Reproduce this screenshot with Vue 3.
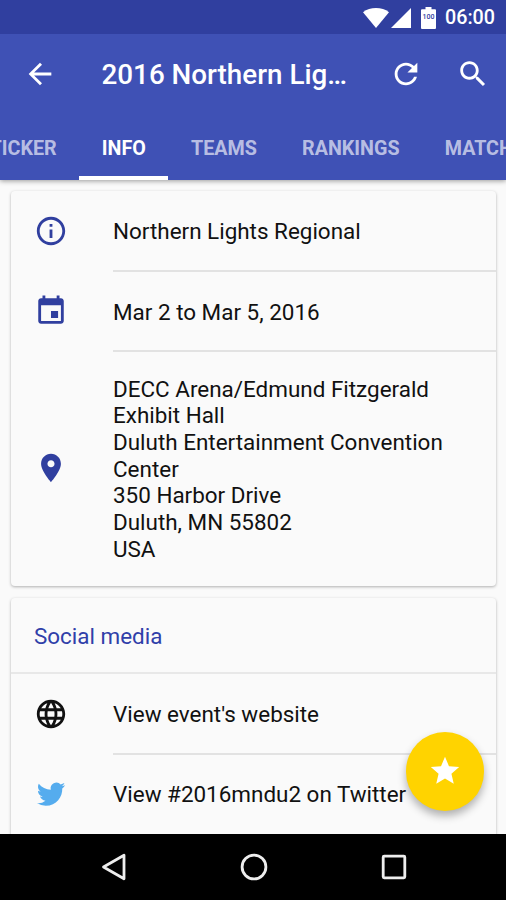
<template>
  <div class="screen">
    <header class="app-header">
      <div class="status-bar">
        <svg class="wifi" viewBox="0 0 26 20">
          <path d="M13 20 0 4.2C7-1.4 19-1.4 26 4.2Z" />
        </svg>
        <svg class="signal" viewBox="0 0 20 20"><path d="M0 20 20 0V20Z" /></svg>
        <div class="battery">
          <svg viewBox="0 0 15 22">
            <path d="M4.5 0h6v2.2H14q1 0 1 1V21q0 1-1 1H1q-1 0-1-1V3.200q0-1 1-1h3.500Z" />
          </svg>
          <span class="battery-level">100</span>
        </div>
        <span class="clock">06:00</span>
      </div>

      <div class="toolbar">
        <svg class="icon back" viewBox="0 0 24 24"><path :d="icons.back" /></svg>
        <h1 class="title">2016 Northern Lig…</h1>
        <svg class="icon refresh" viewBox="0 0 24 24"><path :d="icons.refresh" /></svg>
        <svg class="icon search" viewBox="0 0 24 24"><path :d="icons.search" /></svg>
      </div>

      <nav class="tabs">
        <div
          v-for="tab in tabs"
          :key="tab"
          :class="['tab', { active: tab === activeTab }]"
          @click="activeTab = tab"
        >
          {{ tab }}
        </div>
      </nav>
    </header>

    <main class="content">
      <section class="card details">
        <div v-for="row in details" :key="row.icon" :class="['row', row.icon]">
          <svg class="icon" viewBox="0 0 24 24"><path :d="icons[row.icon]" /></svg>
          <div class="row-text">
            <div v-for="line in row.lines" :key="line">{{ line }}</div>
          </div>
        </div>
      </section>

      <section class="card social">
        <h2 class="card-title">Social media</h2>
        <div v-for="row in social" :key="row.icon" :class="['row', row.icon]">
          <svg class="icon" viewBox="0 0 24 24"><path :d="icons[row.icon]" /></svg>
          <div class="row-text">
            <div v-for="line in row.lines" :key="line">{{ line }}</div>
          </div>
        </div>
      </section>

      <button class="fab" @click="starred = !starred">
        <svg class="icon" viewBox="0 0 24 24"><path :d="icons.star" /></svg>
      </button>
    </main>

    <footer class="nav-bar">
      <svg viewBox="0 0 28 28"><path d="M24 2.200V25.800L3.500 14Z" /></svg>
      <svg viewBox="0 0 28 28"><circle cx="14" cy="14" r="11.900" /></svg>
      <svg viewBox="0 0 28 28"><rect x="3.200" y="3.200" width="21.600" height="21.600" rx="1" /></svg>
    </footer>
  </div>
</template>

<script setup>
import { ref } from "vue";

const tabs = ["TICKER", "INFO", "TEAMS", "RANKINGS", "MATCHES"];
const activeTab = ref("INFO");
const starred = ref(true);

const details = [
  { icon: "info", lines: ["Northern Lights Regional"] },
  { icon: "event", lines: ["Mar 2 to Mar 5, 2016"] },
  {
    icon: "place",
    lines: [
      "DECC Arena/Edmund Fitzgerald",
      "Exhibit Hall",
      "Duluth Entertainment Convention",
      "Center",
      "350 Harbor Drive",
      "Duluth, MN 55802",
      "USA",
    ],
  },
];

const social = [
  { icon: "web", lines: ["View event's website"] },
  { icon: "twitter", lines: ["View #2016mndu2 on Twitter"] },
];

// 24x24 icon paths
const icons = {
  back: "M20 11H7.830l5.590-5.590L12 4l-8 8 8 8 1.410-1.410L7.830 13H20v-2z",
  refresh:
    "M17.650 6.350C16.200 4.900 14.210 4 12 4c-4.420 0-7.990 3.580-7.990 8s3.570 8 7.990 8c3.730 0 6.840-2.550 7.730-6h-2.080c-.82 2.330-3.040 4-5.650 4-3.310 0-6-2.690-6-6s2.690-6 6-6c1.660 0 3.140.69 4.220 1.780L13 11h7V4l-2.350 2.350z",
  search:
    "M15.500 14h-.79l-.28-.27C15.410 12.590 16 11.110 16 9.500 16 5.910 13.090 3 9.500 3S3 5.910 3 9.500 5.910 16 9.500 16c1.610 0 3.090-.59 4.230-1.570l.27.28v.79l5 4.990L20.490 19l-4.990-5zm-6 0C7.010 14 5 11.990 5 9.500S7.010 5 9.500 5 14 7.010 14 9.500 11.990 14 9.500 14z",
  info: "M11 17h2v-6h-2v6zm1-15C6.480 2 2 6.480 2 12s4.480 10 10 10 10-4.480 10-10S17.520 2 12 2zm0 18c-4.410 0-8-3.590-8-8s3.590-8 8-8 8 3.590 8 8-3.590 8-8 8zM11 9h2V7h-2v2z",
  event:
    "M17 12h-5v5h5v-5zM16 1v2H8V1H6v2H5c-1.110 0-1.990.9-1.990 2L3 19c0 1.100.89 2 2 2h14c1.100 0 2-.9 2-2V5c0-1.100-.9-2-2-2h-1V1h-2zm3 18H5V8h14v11z",
  place:
    "M12 2C8.130 2 5 5.130 5 9c0 5.250 7 13 7 13s7-7.750 7-13c0-3.870-3.130-7-7-7zm0 9.500c-1.380 0-2.500-1.120-2.500-2.500s1.120-2.500 2.500-2.500 2.500 1.120 2.500 2.500-1.120 2.500-2.500 2.500z",
  web: "M11.990 2C6.470 2 2 6.480 2 12s4.470 10 9.990 10C17.520 22 22 17.520 22 12S17.520 2 11.990 2zm6.930 6h-2.950c-.32-1.250-.78-2.450-1.380-3.560 1.840.63 3.370 1.910 4.330 3.560zM12 4.040c.83 1.200 1.480 2.530 1.910 3.960h-3.820c.43-1.430 1.080-2.760 1.910-3.960zM4.260 14C4.100 13.360 4 12.690 4 12s.1-1.360.26-2h3.380c-.08.66-.14 1.320-.14 2 0 .68.06 1.340.14 2H4.260zm.82 2h2.950c.32 1.250.78 2.450 1.380 3.560-1.840-.63-3.370-1.900-4.330-3.560zm2.950-8H5.080c.96-1.660 2.490-2.930 4.330-3.560C8.810 5.550 8.350 6.750 8.030 8zM12 19.960c-.83-1.200-1.480-2.530-1.910-3.960h3.820c-.43 1.430-1.080 2.760-1.910 3.960zM14.340 14H9.660c-.09-.66-.16-1.320-.16-2 0-.68.07-1.350.16-2h4.680c.09.65.16 1.320.16 2 0 .68-.07 1.340-.16 2zm.25 5.560c.6-1.110 1.060-2.310 1.380-3.560h2.950c-.96 1.650-2.490 2.930-4.330 3.560zM16.360 14c.08-.66.14-1.320.14-2 0-.68-.06-1.340-.14-2h3.380c.16.64.26 1.310.26 2s-.1 1.360-.26 2h-3.380z",
  twitter:
    "M22 5.900c-.74.33-1.530.55-2.360.65.85-.51 1.500-1.310 1.800-2.270-.79.47-1.670.81-2.600 1A4.100 4.100 0 0 0 11.850 9C8.440 8.840 5.420 7.200 3.400 4.730c-1.070 1.850-.55 4.260 1.260 5.480-.66-.02-1.290-.2-1.850-.51-.05 1.930 1.330 3.690 3.290 4.080-.58.16-1.230.18-1.850.07.52 1.630 2.030 2.810 3.830 2.850A8.250 8.250 0 0 1 2 18.400 11.600 11.600 0 0 0 8.290 20.240c7.620 0 11.920-6.430 11.660-12.200.8-.58 1.500-1.300 2.050-2.140Z",
  star: "M12 17.270 18.180 21l-1.640-7.030L22 9.240l-7.190-.61L12 2 9.190 8.630 2 9.240l5.460 4.730L5.820 21z",
};
</script>

<style>
body {
  margin: 0;
}
</style>

<style scoped>
.screen {
  width: 506px;
  height: 900px;
  display: flex;
  flex-direction: column;
  overflow: hidden;
  background: #fafafa;
  color: #111;
  font-family: Roboto, "Noto Sans", sans-serif;
}

.app-header {
  flex: none;
  height: 180px;
  background: #3f51b5;
  color: #fff;
  box-shadow: 0 1px 5px rgba(0, 0, 0, 0.4);
  z-index: 1;
}

.icon {
  display: block;
  flex: none;
  width: 34px;
  height: 34px;
  fill: currentColor;
}

/* Status bar */
.status-bar {
  height: 34px;
  box-sizing: border-box;
  padding: 1px 11px 0 0;
  display: flex;
  align-items: center;
  justify-content: flex-end;
  background: #303f9f;
}

.status-bar svg {
  display: block;
  fill: #fff;
}

.wifi {
  width: 26px;
  height: 20px;
  margin-right: 2px;
}

.signal {
  width: 20px;
  height: 20px;
  margin-right: 10.5px;
}

.battery {
  position: relative;
  width: 15px;
  height: 22px;
  margin-right: 9px;
}

.battery-level {
  position: absolute;
  top: 6px;
  left: 0;
  width: 15px;
  text-align: center;
  font-size: 7px;
  line-height: 9px;
  font-weight: 500;
  color: #303f9f;
}

.clock {
  font-size: 19.7px;
  font-weight: 500;
  line-height: 34px;
}

/* Toolbar */
.toolbar {
  height: 79px;
  padding: 0 16.5px 0 23px;
  display: flex;
  align-items: center;
}

.title {
  flex: 1;
  margin: 0 0 0 44.5px;
  padding-top: 2px;
  font-size: 27.8px;
  font-weight: 500;
  white-space: nowrap;
}

.refresh {
  margin-right: 33px;
}

/* Tabs */
.tabs {
  height: 67px;
  display: flex;
  margin-left: -33px;
  overflow: hidden;
}

.tab {
  flex: none;
  box-sizing: border-box;
  height: 67px;
  padding: 0 22.6px;
  border-bottom: 4px solid transparent;
  font-size: 19.7px;
  line-height: 71px;
  font-weight: 700;
  color: rgba(255, 255, 255, 0.65);
}

.tab.active {
  color: #fff;
  border-bottom-color: #fff;
}

/* Content */
.content {
  position: relative;
  flex: 1;
  min-height: 0;
  padding: 11px 10px 0 11px;
  overflow: hidden;
}

.card {
  margin-bottom: 12px;
  border-radius: 4px;
  background: #fafafa;
  box-shadow: 0 1px 3px rgba(0, 0, 0, 0.3);
}

/* scrolls on below the fold */
.card.social {
  padding-bottom: 12px;
}

.row {
  display: flex;
  align-items: center;
  height: 80px;
  padding-left: 23px;
}

.row.info,
.row.web {
  height: 79px;
}

.row.place {
  height: 236px;
}

.event .icon,
.twitter .icon {
  margin-top: 2px;
}

.row-text {
  flex: 1;
  align-self: stretch;
  display: flex;
  flex-direction: column;
  justify-content: center;
  margin-left: 45px;
  padding-top: 2px;
  font-size: 22.45px;
  line-height: 26.7px;
  color: #111;
  white-space: nowrap;
}

.place .row-text {
  padding-top: 0;
}

.twitter .row-text {
  padding-top: 1px;
}

.row + .row .row-text {
  border-top: 2px solid #e2e2e2;
}

.info,
.event,
.place {
  color: #303f9f;
}

.web {
  color: #111;
}

.twitter {
  color: #55acee;
}

.card-title {
  margin: 0;
  height: 74px;
  padding-left: 23px;
  border-bottom: 2px solid #e8e8e8;
  font-size: 22.45px;
  font-weight: 400;
  line-height: 76px;
  color: #303fa9;
}

/* Floating button over the list */
.fab {
  position: absolute;
  right: 22px;
  bottom: 23.5px;
  width: 78.5px;
  height: 78.5px;
  padding: 0;
  border: 0;
  border-radius: 50%;
  display: flex;
  align-items: center;
  justify-content: center;
  background: #ffd300;
  color: #fff;
  box-shadow: 0 5px 9px rgba(0, 0, 0, 0.3);
}

/* System navigation */
.nav-bar {
  flex: none;
  height: 66px;
  padding-left: 1px;
  display: flex;
  align-items: center;
  justify-content: center;
  gap: 112px;
  background: #000;
}

.nav-bar svg {
  width: 28px;
  height: 28px;
  fill: none;
  stroke: #eee;
  stroke-width: 2.8;
  stroke-linejoin: round;
}
</style>
